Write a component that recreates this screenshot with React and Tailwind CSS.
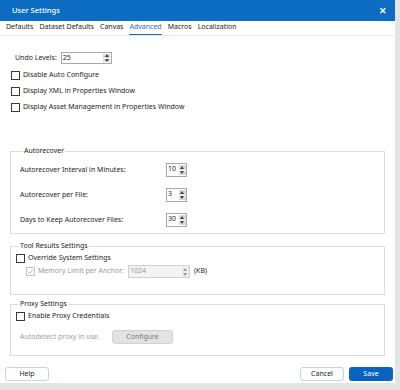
import React from 'react';

const Check = ({ checked = false, disabled = false }) => (
    <span
        className={`w-[9px] h-[9px] border flex items-center justify-center shrink-0 ${disabled ? 'border-[#c4c4c4]' : 'border-[#3a3a3a]'} bg-white`}
    >
        {checked && (
            <svg width="7" height="7" viewBox="0 0 7 7">
                <path d="M1 3.6 L2.8 5.4 L6 1.4" fill="none" stroke="#b0b0b0" strokeWidth="0.9" />
            </svg>
        )}
    </span>
);

const SpinArrows = ({ disabled = false }) => (
    <div className="w-[8px] h-full flex flex-col items-center justify-center gap-[1px] py-[1px]">
        <div className={`w-[7px] flex-1 flex items-center justify-center ${disabled ? 'bg-[#ececec]' : 'bg-[#d9d9d9]'}`}>
            <svg width="4" height="3" viewBox="0 0 4 3"><path d="M0 3 L2 0 L4 3Z" fill={disabled ? '#9a9a9a' : '#444'} /></svg>
        </div>
        <div className={`w-[7px] flex-1 flex items-center justify-center ${disabled ? 'bg-[#ececec]' : 'bg-[#d9d9d9]'}`}>
            <svg width="4" height="3" viewBox="0 0 4 3"><path d="M0 0 L4 0 L2 3Z" fill={disabled ? '#9a9a9a' : '#444'} /></svg>
        </div>
    </div>
);

const Spinner = ({ value, width = 'w-[21px]', height = 'h-[14px]', disabled = false }) => (
    <div className={`${width} ${height} border ${disabled ? 'border-[#cfcfcf] bg-[#f3f3f3]' : 'border-[#a8a8a8] bg-white'} flex shrink-0`}>
        <div className={`flex-1 pl-[1px] leading-[9px] ${disabled ? 'text-[#9a9a9a]' : 'text-[#222]'}`}>{value}</div>
        <SpinArrows disabled={disabled} />
    </div>
);

const Group = ({ title, className = '', children }) => (
    <fieldset className={`border border-[#dcdcdc] ${className}`}>
        <legend className="ml-[3px] px-[1px] leading-[10px] text-[#222]">{title}</legend>
        {children}
    </fieldset>
);

const tabs = ['Defaults', 'Dataset Defaults', 'Canvas', 'Advanced', 'Macros', 'Localization'];

export default function App() {
    return (
        <div className="w-[400px] h-[390px] bg-[#e4e4e4] overflow-hidden font-['Noto_Sans',sans-serif] text-[7px] text-[#1e1e1e]">
            <div className="w-[395px] h-[383px] bg-white flex flex-col">
                {/* title bar */}
                <div className="h-[21px] bg-[#0b6cc2] flex items-center justify-between pl-[12px] pr-[8px] text-white">
                    <span className="text-[7.5px] font-medium">User Settings</span>
                    <span className="text-[9px] font-bold leading-none">✕</span>
                </div>

                {/* tabs */}
                <div className="h-[15px] mr-[1px] border-b border-[#e6e6e6] flex items-end gap-[6px] pl-[6px]">
                    {tabs.map((t) => (
                        <span
                            key={t}
                            className={`h-[14px] leading-[12px] ${t === 'Advanced' ? 'text-[#1b6fc2] border-b border-[#1b6fc2]' : ''}`}
                        >
                            {t}
                        </span>
                    ))}
                </div>

                {/* content */}
                <div className="px-[10px]">
                    <div className="mt-[16px] h-[12px] flex items-center">
                        <span className="ml-[5px] mr-[4px]">Undo Levels:</span>
                        <Spinner value="25" width="w-[51px]" height="h-[12px]" />
                    </div>

                    <div className="mt-[3px] flex flex-col">
                        {['Disable Auto Configure', 'Display XML in Properties Window', 'Display Asset Management in Properties Window'].map((l) => (
                            <label key={l} className="h-[16px] flex items-center gap-[3px] pl-[1px]">
                                <Check />
                                <span>{l}</span>
                            </label>
                        ))}
                    </div>

                    <Group title="Autorecover" className="mt-[31px] pl-[9px] pt-[7px] pb-[6px] flex flex-col gap-[11px]">
                        {[['Autorecover Interval in Minutes:', '10'], ['Autorecover per File:', '3'], ['Days to Keep Autorecover Files:', '30']].map(([l, v]) => (
                            <div key={l} className="h-[14px] flex items-center">
                                <span className="w-[146px]">{l}</span>
                                <Spinner value={v} />
                            </div>
                        ))}
                    </Group>

                    <Group title="Tool Results Settings" className="mt-[7px] pl-[5px] pt-[1px] pb-[16px]">
                        <label className="h-[12px] flex items-center gap-[3px]">
                            <Check />
                            <span>Override System Settings</span>
                        </label>
                        <div className="mt-[1px] h-[13px] flex items-center pl-[10px]">
                            <Check checked disabled />
                            <span className="ml-[3px] w-[90px] text-[#9a9a9a]">Memory Limit per Anchor:</span>
                            <Spinner value="1024" width="w-[62px]" height="h-[13px]" disabled />
                            <span className="ml-[4px]">(KB)</span>
                        </div>
                    </Group>

                    <Group title="Proxy Settings" className="mt-[4px] pl-[5px] pt-[1px] pb-[11px]">
                        <label className="h-[12px] flex items-center gap-[3px]">
                            <Check />
                            <span>Enable Proxy Credentials</span>
                        </label>
                        <div className="mt-[8px] h-[14px] flex items-center pl-[4px]">
                            <span className="w-[92px] text-[#a0a0a0]">Autodetect proxy in use.</span>
                            <button className="w-[61px] h-[14px] rounded-[3px] bg-[#e3e3e3] border border-[#d2d2d2] text-[#7a7a7a]">Configure</button>
                        </div>
                    </Group>
                </div>

                {/* footer */}
                <div className="mt-auto pb-[2px] pl-[5px] pr-[2px] flex items-center">
                    <button className="w-[44px] h-[14px] rounded-[3px] border border-[#c5d3ea] bg-white">Help</button>
                    <div className="ml-auto flex gap-[5px]">
                        <button className="w-[44px] h-[14px] rounded-[3px] border border-[#c5d3ea] bg-white">Cancel</button>
                        <button className="w-[44px] h-[14px] rounded-[3px] bg-[#0b63c0] text-white">Save</button>
                    </div>
                </div>
            </div>
        </div>
    );
}
